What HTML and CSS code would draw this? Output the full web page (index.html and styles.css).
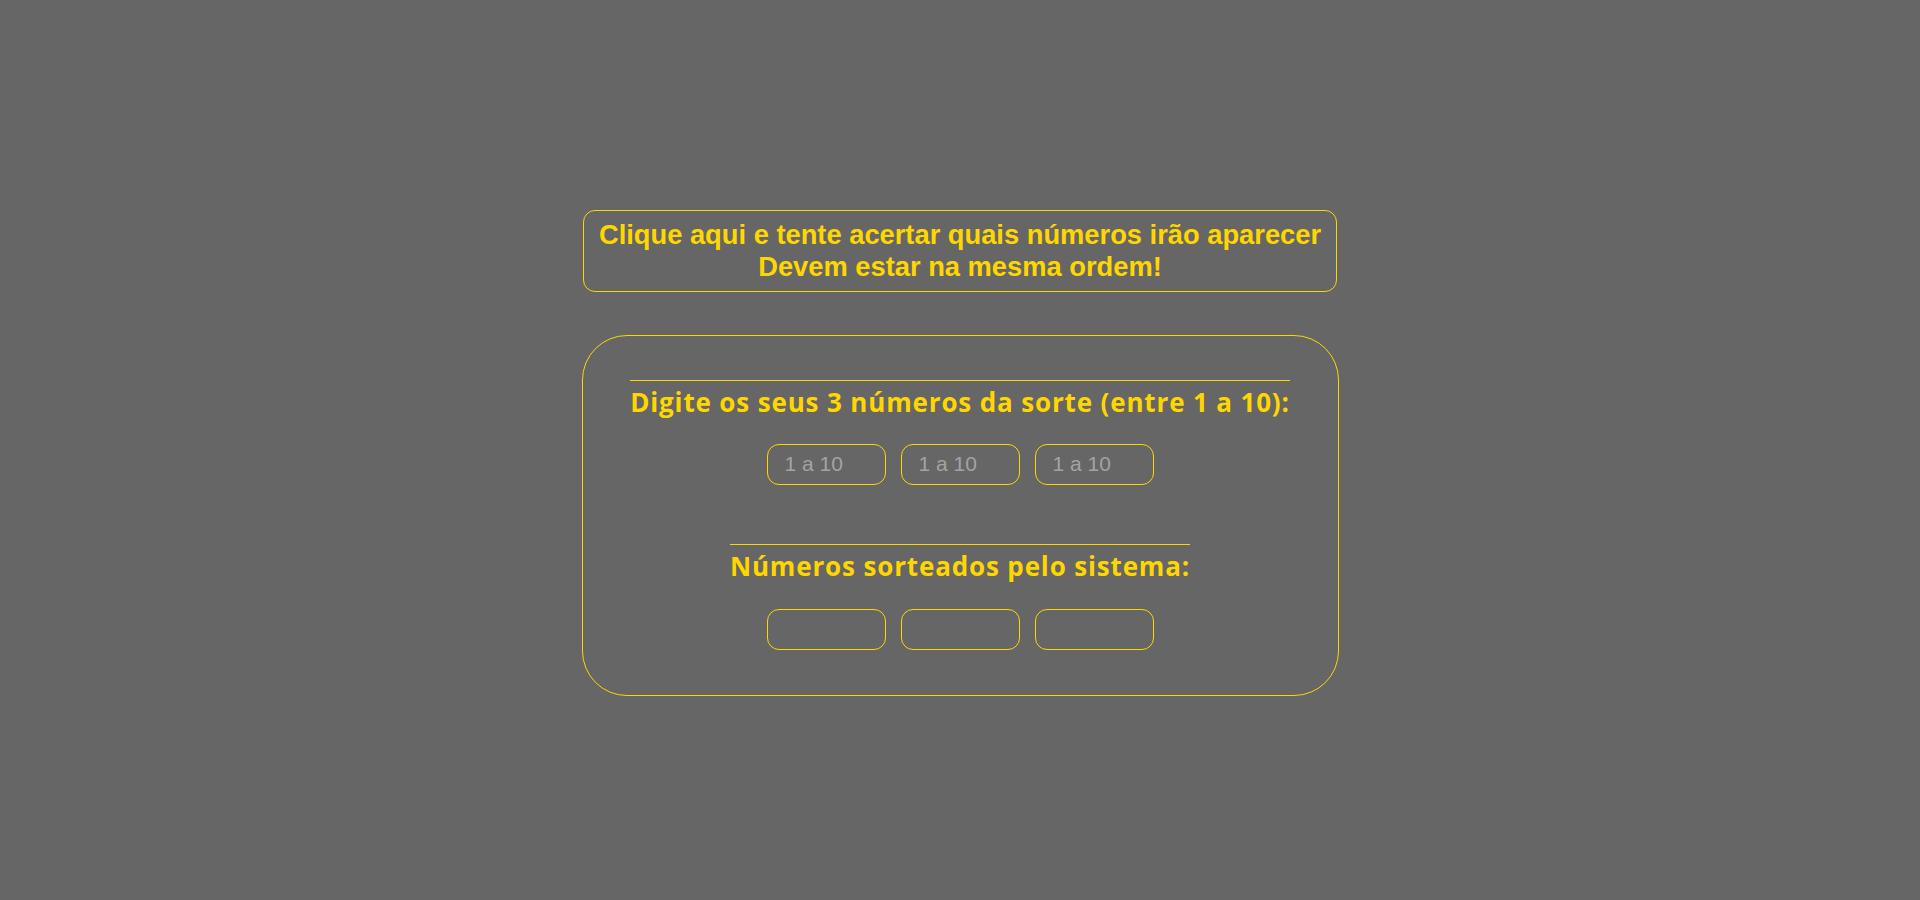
FILE: index.html
```html
<!DOCTYPE html>
<html lang="pt-BR">
<head>
<meta charset="utf-8">
<title>Sorteio</title>
<link rel="stylesheet" href="styles.css">
</head>
<body>
  <main class="page">
    <button class="play-btn" type="button">Clique aqui e tente acertar quais números irão aparecer<br>Devem estar na mesma ordem!</button>
    <section class="card">
      <h2 class="section-title">Digite os seus 3 números da sorte (entre 1 a 10):</h2>
      <div class="row guess-row">
        <input class="num" type="text" placeholder="1 a 10">
        <input class="num" type="text" placeholder="1 a 10">
        <input class="num" type="text" placeholder="1 a 10">
      </div>
      <h2 class="section-title second">Números sorteados pelo sistema:</h2>
      <div class="row">
        <input class="num" type="text" readonly>
        <input class="num" type="text" readonly>
        <input class="num" type="text" readonly>
      </div>
    </section>
  </main>
</body>
</html>
```

FILE: styles.css
```css
html, body {
  margin: 0;
  padding: 0;
  background: #666666;
}

.page {
  box-sizing: border-box;
  min-height: 100vh;
  padding-top: 5px;
  display: flex;
  flex-direction: column;
  align-items: center;
  justify-content: center;
  gap: 43px;
}

.play-btn {
  background: transparent;
  border: 1px solid #ffd700;
  border-radius: 12px;
  color: #ffd700;
  font-family: "Liberation Sans", Arial, sans-serif;
  font-weight: bold;
  font-size: 27.3px;
  line-height: 32px;
  padding: 8px 15px;
  text-align: center;
  cursor: pointer;
}

.card {
  box-sizing: border-box;
  width: 757px;
  height: 361px;
  border: 1px solid #ffd700;
  border-radius: 45px;
  padding: 44px 0 0;
  display: flex;
  flex-direction: column;
  align-items: center;
}

.section-title {
  margin: 0;
  border-top: 1px solid #ffd700;
  color: #ffd700;
  font-family: "Open Sans", "Noto Sans", sans-serif;
  font-weight: 700;
  font-size: 26px;
  line-height: 36px;
  letter-spacing: 0.85px;
  padding-top: 3px;
  text-align: center;
}

.section-title.second {
  margin-top: 59px;
}

.row {
  display: flex;
  gap: 15px;
  margin-top: 25px;
}

.row.guess-row {
  margin-top: 24px;
}

.num {
  box-sizing: border-box;
  width: 119px;
  height: 41px;
  border: 1px solid #ffd700;
  border-radius: 12px;
  background: transparent;
  padding: 0 0 0 17px;
  font-family: "Liberation Sans", Arial, sans-serif;
  font-size: 21px;
  color: #ffd700;
  outline: none;
}

.num::placeholder {
  color: #a3a3a3;
}
```
